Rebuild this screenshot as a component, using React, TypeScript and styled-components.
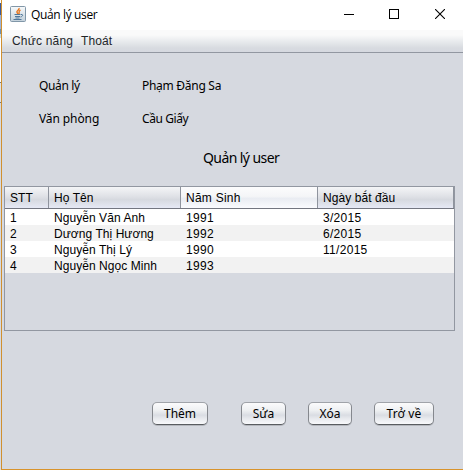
import React from "react";
import styled, { createGlobalStyle } from "styled-components";

const Global = createGlobalStyle`
  * { box-sizing: border-box; }
  html, body { margin: 0; padding: 0; width: 463px; height: 470px; overflow: hidden; background: #fff; }
`;

const Screen = styled.div`
  display: grid;
  grid-template-columns: 1px 462px;
  width: 463px;
  height: 470px;
`;

const Backdrop = styled.div`
  background: linear-gradient(#fff 0 3px, #3c5a9c 3px 15px, #9db4dc 15px 29px, #6f8fb0 29px 34px, #c4dbe6 34px 38px, #fff 38px 82px, #777 82px 83px, #dfe3ea 83px 102px, #777 102px 103px, #d6d9e0 103px);
`;

const Frame = styled.main`
  display: flex;
  flex-direction: column;
  height: 470px;
  background: #d6d9e0;
  border-left: 1px solid #d0902f;
  border-bottom: 1px solid #d8932c;
  color: #000;
`;

const TitleBar = styled.header`
  display: flex;
  align-items: center;
  height: 30px;
  background: #fff;
  padding: 0 18px 2px 8px;
`;

const Title = styled.h1`
  flex: 1;
  margin: 1px 0 0 5px;
  font: 400 12px/20px "Open Sans", "Noto Sans", sans-serif;
  letter-spacing: -0.36px;
`;

const Controls = styled.div`
  display: grid;
  grid-template-columns: 45px 46px 10px;
  align-items: center;
`;

const MenuBar = styled.nav`
  display: flex;
  gap: 8px;
  height: 23px;
  padding: 0 10px;
  border-bottom: 1px solid #9297a1;
  background: linear-gradient(#fafafa 0, #fafafa 5px, #eceef0 10px, #d8dbe0 18px, #d6d9e0 22px);
  color: #232629;
`;

const MenuItem = styled.span<{ $w: number; $ls: number }>`
  width: ${(p) => p.$w}px;
  white-space: nowrap;
  font: 12px/23px "Liberation Sans", Arial, sans-serif;
  letter-spacing: ${(p) => p.$ls}px;
`;

const Details = styled.dl`
  display: grid;
  grid-template-columns: 103px auto;
  grid-auto-rows: 33px;
  margin: 16px 0 0 37px;
`;

const Detail = styled.span<{ $ls?: number }>`
  font: 12px/33px "Noto Sans", sans-serif;
  letter-spacing: ${(p) => p.$ls ?? 0}px;
`;

const Heading = styled.h2`
  margin: 11px 0 0 201px;
  font: 400 14px/24px "Noto Sans", sans-serif;
  letter-spacing: -0.58px;
  white-space: nowrap;
`;

const TableBox = styled.section`
  width: 451px;
  height: 145px;
  margin: 16px 0 0 2px;
  border: 1px solid #9297a1;
  font: 12px/16px "Liberation Sans", Arial, sans-serif;
`;

const columns = "44px 132px 137px 136px";

const HeadRow = styled.div`
  display: grid;
  grid-template-columns: ${columns};
  height: 22px;
  border-bottom: 1px solid #737680;
`;

const HeadCell = styled.div<{ $hot?: boolean }>`
  padding: 1px 0 0 5px;
  line-height: 20px;
  white-space: nowrap;
  letter-spacing: ${(p) => (p.$hot ? 0.25 : 0.08)}px;
  border-right: 1px solid #8f949e;
  background: ${(p) =>
    p.$hot
      ? "linear-gradient(#fcfcfd, #f4f5f7 45%, #e9ecf2 55%, #fafbfe)"
      : "linear-gradient(#f4f5f7, #dfe1e6 45%, #d6d9df 60%, #e6e9f5)"};
`;

const Row = styled.div`
  display: grid;
  grid-template-columns: ${columns};
  height: 16px;
  background: #fff;
  &:nth-child(odd) { background: #f2f2f2; }
`;

const Cell = styled.div<{ $ls?: number }>`
  padding-left: 5px;
  line-height: 18px;
  white-space: nowrap;
  letter-spacing: ${(p) => p.$ls ?? 0}px;
`;

const Actions = styled.footer`
  display: grid;
  grid-template-columns: 89px 67px 66px 60px;
  margin: 71px 0 0 150px;
`;

const Button = styled.button<{ $w: number; $ls?: number }>`
  width: ${(p) => p.$w}px;
  height: 23px;
  padding: 0;
  border: 1px solid #85888e;
  border-bottom-color: #595c60;
  border-top-color: #a0a3a9;
  border-radius: 5px;
  background: linear-gradient(#fbfbfc, #eef0f2 35%, #dadde3 58%, #e8eaee 75%, #f8f9fb);
  box-shadow: 0 1px 0 #b4b7bd;
  font: 12px/20px "Noto Sans", sans-serif;
  letter-spacing: ${(p) => p.$ls ?? 0}px;
  color: #000;
  white-space: nowrap;
`;

const JavaIcon = () => (
  <svg width="16" height="16" viewBox="0 0 16 16">
    <defs>
      <linearGradient id="tile" x2="0" y2="1">
        <stop stopColor="#f8fafb" />
        <stop offset="1" stopColor="#c2d0da" />
      </linearGradient>
    </defs>
    <rect x=".5" y=".5" width="15" height="15" rx="1" fill="url(#tile)" stroke="#8197a8" />
    <path d="M9 2c1 2-3 2.500-2 4.500l1 1.500M10.500 4C8 5.500 9.500 6 9 8" fill="none" stroke="#e8771e" strokeWidth="1.400" />
    <path d="M4.500 8.500h6M5 10.500h5M5.500 12h4M3.500 13.500h8M11 8.500c2.500-.5 2 2-.5 2.500" fill="none" stroke="#50779a" />
  </svg>
);

const users = [
  ["1", "Nguyễn Văn Anh", "1991", "3/2015"],
  ["2", "Dương Thị Hương", "1992", "6/2015"],
  ["3", "Nguyễn Thị Lý", "1990", "11/2015"],
  ["4", "Nguyễn Ngọc Minh", "1993", ""],
];

export default function App() {
  return (
    <>
      <Global />
      <Screen>
        <Backdrop />
        <Frame>
          <TitleBar>
            <JavaIcon />
            <Title>Quản lý user</Title>
            <Controls>
              <svg width="10" height="10"><path d="M0 5.500h10" stroke="#000" /></svg>
              <svg width="10" height="10"><rect x=".5" y=".5" width="9" height="9" fill="none" stroke="#000" /></svg>
              <svg width="10" height="10"><path d="M0 0l10 10M10 0L0 10" stroke="#000" strokeWidth="1.100" /></svg>
            </Controls>
          </TitleBar>
          <MenuBar>
            <MenuItem $w={61} $ls={0.2}>Chức năng</MenuItem>
            <MenuItem $w={32} $ls={0.1}>Thoát</MenuItem>
          </MenuBar>
          <Details>
            <Detail $ls={-0.35}>Quản lý</Detail>
            <Detail $ls={-0.28}>Phạm Đăng Sa</Detail>
            <Detail $ls={-0.1}>Văn phòng</Detail>
            <Detail $ls={-0.4}>Cầu Giấy</Detail>
          </Details>
          <Heading>Quản lý user</Heading>
          <TableBox>
            <HeadRow>
              <HeadCell>STT</HeadCell>
              <HeadCell>Họ Tên</HeadCell>
              <HeadCell $hot>Năm Sinh</HeadCell>
              <HeadCell>Ngày bắt đầu</HeadCell>
            </HeadRow>
            {users.map(([id, name, born, start]) => (
              <Row key={id}>
                <Cell>{id}</Cell>
                <Cell $ls={0.06}>{name}</Cell>
                <Cell $ls={0.35}>{born}</Cell>
                <Cell $ls={0.3}>{start}</Cell>
              </Row>
            ))}
          </TableBox>
          <Actions>
            <Button $w={56}>Thêm</Button>
            <Button $w={45}>Sửa</Button>
            <Button $w={44}>Xóa</Button>
            <Button $w={60} $ls={0.15}>Trở về</Button>
          </Actions>
        </Frame>
      </Screen>
    </>
  );
}
